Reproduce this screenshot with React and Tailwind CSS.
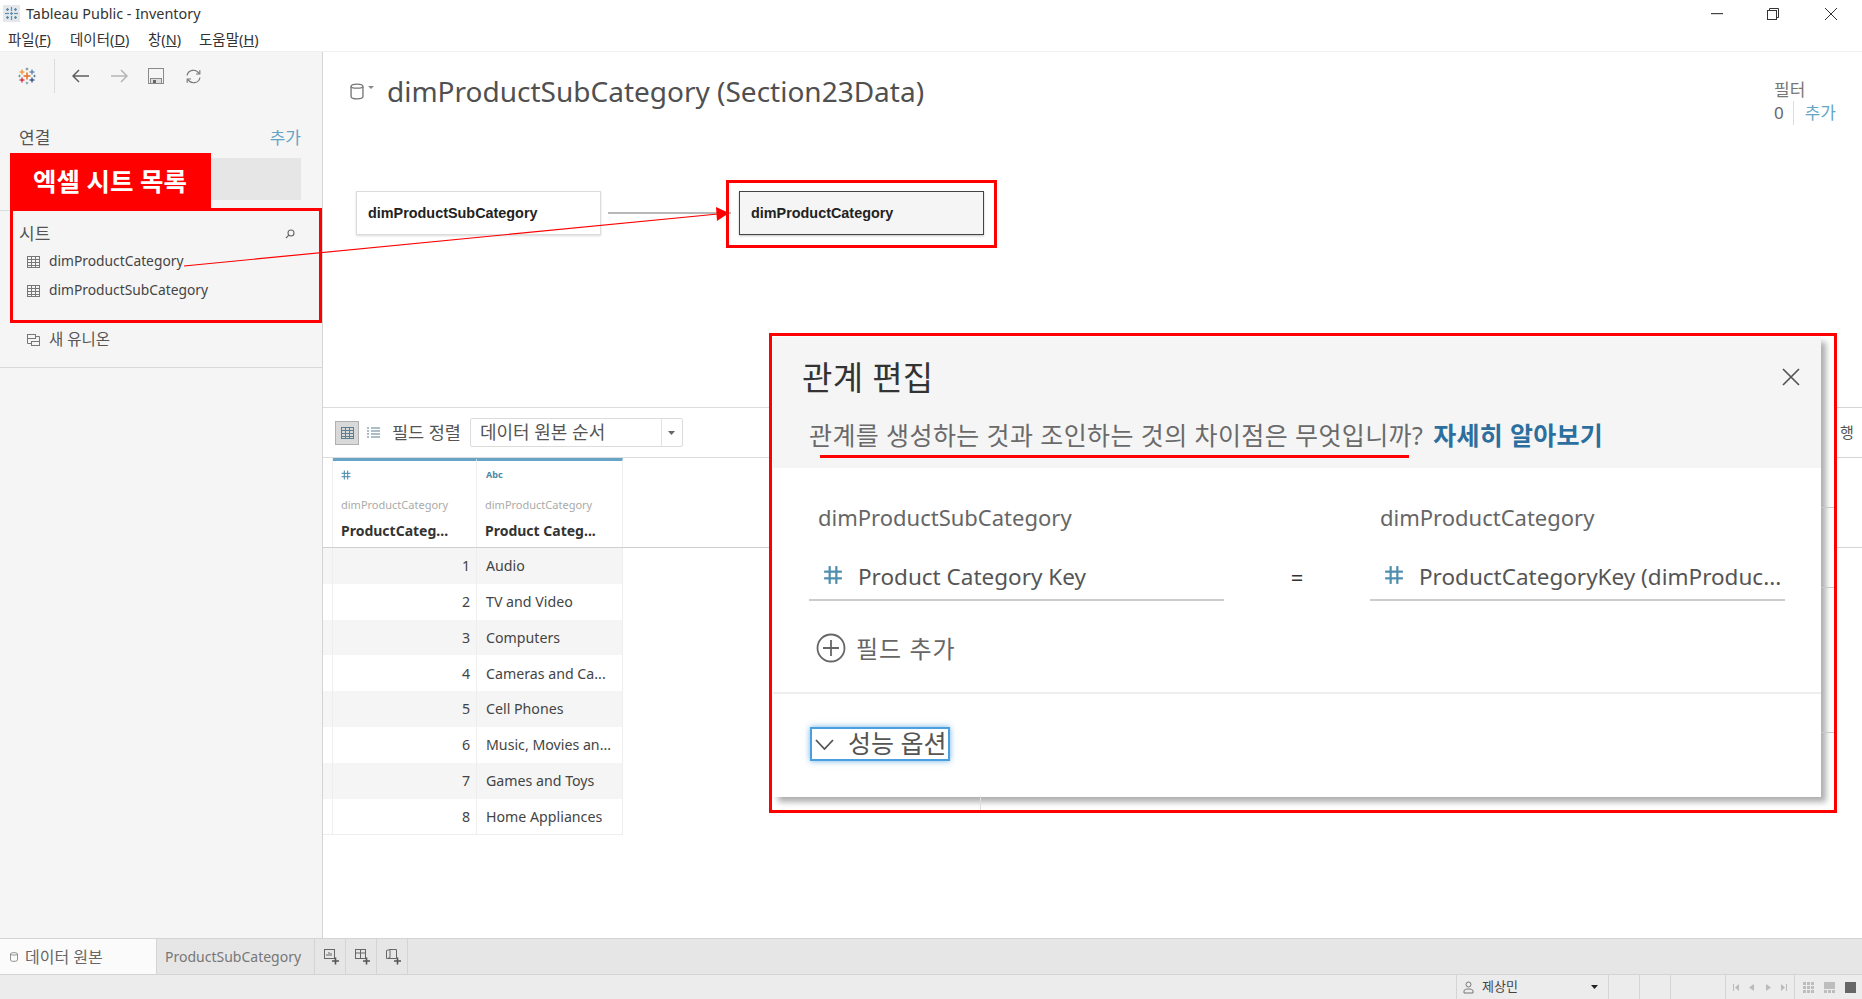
import React from "react";

const KR = '"Noto Sans","Noto Sans CJK KR",sans-serif';

function TableauLogo() {
  const P = ({ x, y, s, w, c }) => (
    <g stroke={c} strokeWidth={w}>
      <line x1={x - s} y1={y} x2={x + s} y2={y} />
      <line x1={x} y1={y - s} x2={x} y2={y + s} />
    </g>
  );
  return (
    <svg width="18" height="18" viewBox="0 0 18 18">
      <P x={9} y={9} s={3.5} w={1.6} c="#e8762b" />
      <P x={4} y={5} s={2.5} w={1.2} c="#f28e2b" />
      <P x={14} y={5} s={2.5} w={1.2} c="#4e79a7" />
      <P x={4} y={13} s={2.5} w={1.2} c="#c72035" />
      <P x={14} y={13} s={2.5} w={1.2} c="#1f447e" />
      <P x={9} y={2} s={1.3} w={1} c="#59879b" />
      <P x={9} y={16} s={1.3} w={1} c="#7099a6" />
      <P x={1.5} y={9} s={1.3} w={1} c="#7099a6" />
      <P x={16.5} y={9} s={1.3} w={1} c="#59879b" />
    </svg>
  );
}

function AppIcon() {
  return (
    <svg width="17" height="17" viewBox="0 0 17 17">
      <rect width="17" height="17" fill="#e4e8ec" />
      <g stroke="#5b8fb0" strokeWidth="1.2">
        <line x1="8.5" y1="2" x2="8.5" y2="6" />
        <line x1="8.5" y1="11" x2="8.5" y2="15" />
        <line x1="2" y1="8.5" x2="6" y2="8.5" />
        <line x1="11" y1="8.5" x2="15" y2="8.5" />
        <line x1="7" y1="8.5" x2="10" y2="8.5" />
        <line x1="8.5" y1="7" x2="8.5" y2="10" />
        <line x1="3" y1="4.5" x2="6" y2="4.5" />
        <line x1="4.5" y1="3" x2="4.5" y2="6" />
        <line x1="11" y1="4.5" x2="14" y2="4.5" />
        <line x1="12.5" y1="3" x2="12.5" y2="6" />
        <line x1="3" y1="12.5" x2="6" y2="12.5" />
        <line x1="4.5" y1="11" x2="4.5" y2="14" />
        <line x1="11" y1="12.5" x2="14" y2="12.5" />
        <line x1="12.5" y1="11" x2="12.5" y2="14" />
      </g>
    </svg>
  );
}

function GridIcon({ color = "#777" }) {
  return (
    <svg width="13" height="12" viewBox="0 0 13 12" fill="none" stroke={color} strokeWidth="1">
      <rect x="0.5" y="0.5" width="12" height="11" />
      <line x1="0.5" y1="3.5" x2="12.5" y2="3.5" />
      <line x1="0.5" y1="6.5" x2="12.5" y2="6.5" />
      <line x1="0.5" y1="9.5" x2="12.5" y2="9.5" />
      <line x1="4.5" y1="0.5" x2="4.5" y2="11.5" />
      <line x1="8.5" y1="0.5" x2="8.5" y2="11.5" />
    </svg>
  );
}

function DbIcon({ w = 8, h = 10 }) {
  return (
    <svg width={w} height={h} viewBox="0 0 8 10" fill="none" stroke="#777" strokeWidth="0.8">
      <path d="M0.5 2 C0.5 0.2 7.5 0.2 7.5 2 V8 C7.5 9.8 0.5 9.8 0.5 8 Z" />
      <path d="M0.5 2 C0.5 3.4 7.5 3.4 7.5 2" />
    </svg>
  );
}

function HashIcon({ size = 18, color = "#4f8fae" }) {
  return (
    <svg width={size} height={size} viewBox="0 0 18 18" stroke={color} strokeWidth="2" fill="none">
      <line x1="6" y1="1" x2="6" y2="17" />
      <line x1="12" y1="1" x2="12" y2="17" />
      <line x1="1" y1="6" x2="17" y2="6" />
      <line x1="1" y1="12" x2="17" y2="12" />
    </svg>
  );
}

function TabPlusIcon({ kind }) {
  return (
    <svg width="16" height="16" viewBox="0 0 16 16" fill="none" stroke="#666" strokeWidth="1">
      {kind === "sheet" && (
        <>
          <rect x="0.5" y="0.5" width="10" height="9" />
          <path d="M3 7V5M5 7V3M7 7V4" />
        </>
      )}
      {kind === "dash" && (
        <>
          <rect x="0.5" y="0.5" width="10" height="9" />
          <path d="M0.5 4H10.5M5.5 0.5V9.5" />
        </>
      )}
      {kind === "story" && <path d="M0.5 1.5 L4 0.5 V8.5 L1.5 9.5 H0.5Z M4 0.5 H10.5 V9.5 H1.5" />}
      <path d="M8 12H15M11.5 8.5V15.5" stroke="#555" strokeWidth="1.6" />
    </svg>
  );
}

const rows = [
  [1, "Audio"],
  [2, "TV and Video"],
  [3, "Computers"],
  [4, "Cameras and Ca..."],
  [5, "Cell Phones"],
  [6, "Music, Movies an..."],
  [7, "Games and Toys"],
  [8, "Home Appliances"],
];

function Sidebar() {
  return (
    <aside className="flex w-[323px] shrink-0 flex-col border-r border-[#d4d4d4] bg-[#f5f5f5]">
      <div className="flex h-[48px] items-center">
        <div className="ml-[18px] flex w-[18px] justify-center">
          <TableauLogo />
        </div>
        <div className="ml-[18px] h-[34px] w-px bg-[#dcdcdc]" />
        <svg className="ml-[17px]" width="18" height="14" viewBox="0 0 18 14" fill="none" stroke="#5f5f5f" strokeWidth="1.5">
          <path d="M17 7H1M7 1L1 7L7 13" />
        </svg>
        <svg className="ml-[20px]" width="18" height="14" viewBox="0 0 18 14" fill="none" stroke="#b5b5b5" strokeWidth="1.5">
          <path d="M1 7H17M11 1L17 7L11 13" />
        </svg>
        <svg className="ml-[20px]" width="16" height="16" viewBox="0 0 16 16" fill="none" stroke="#8a8a8a" strokeWidth="1">
          <rect x="0.5" y="0.5" width="15" height="15" />
          <rect x="2.5" y="10.5" width="11" height="5" fill="#ddd" />
          <rect x="5" y="12" width="3" height="3" fill="#666" stroke="none" />
        </svg>
        <svg className="ml-[21px]" width="17" height="17" viewBox="0 0 17 17" fill="none" stroke="#777" strokeWidth="1.2">
          <path d="M2 7.5A6.5 6.5 0 0 1 14 5.5" />
          <path d="M15 9.5A6.5 6.5 0 0 1 3 11.5" />
          <path d="M14.8 2.2V6H11" />
          <path d="M2.2 14.8V11H6" />
        </svg>
      </div>
      <div className="flex h-[52px] items-end justify-between pl-[19px] pr-[21px] text-[17px] leading-[28px]">
        <span className="text-[#555]">연결</span>
        <span className="text-[#64a5c6]">추가</span>
      </div>
      <div className="ml-[10px] mr-[21px] mt-[6px] h-[42px] bg-[#e6e6e6]" />
      <div className="mt-[10px] h-[1px] bg-[#dddddd]" />
      <div className="flex h-[36px] items-end justify-between pl-[19px] pr-[27px] text-[17px] leading-[26px] text-[#555]">
        <span>시트</span>
        <svg className="mb-[8px]" width="10" height="10" viewBox="0 0 10 10" fill="none" stroke="#666" strokeWidth="1.1">
          <circle cx="6" cy="4" r="3" />
          <path d="M3.8 6.2L1 9" />
        </svg>
      </div>
      {["dimProductCategory", "dimProductSubCategory"].map((t) => (
        <div key={t} className="flex h-[29px] items-center pl-[27px] text-[13.8px] text-[#444]">
          <GridIcon />
          <span className="ml-[9px]">{t}</span>
        </div>
      ))}
      <div className="mt-[20px] flex h-[29px] items-center pl-[27px] text-[15.5px] text-[#555]">
        <svg width="13" height="12" viewBox="0 0 13 12" fill="none" stroke="#777" strokeWidth="1">
          <rect x="0.5" y="0.5" width="8" height="4" />
          <rect x="4.5" y="7.5" width="8" height="4" />
          <path d="M8.5 2.5H12.5V7.5M4.5 9.5H0.5V4.5" />
        </svg>
        <span className="ml-[9px]">새 유니온</span>
      </div>
      <div className="mt-[13px] h-[1px] bg-[#d9d9d9]" />
    </aside>
  );
}

function Main() {
  return (
    <main className="flex min-w-0 flex-1 flex-col bg-white">
      <div className="relative h-[355px]">
        <div className="flex items-center pl-[27px] pt-[16px]">
          <DbIcon w={14} h={17} />
          <svg className="mb-[6px] ml-[4px]" width="6" height="4" viewBox="0 0 6 4" fill="#888">
            <path d="M0 0H6L3 3Z" />
          </svg>
          <h1 className="ml-[13px] text-[28px] font-normal leading-[46px] text-[#505050]">
            dimProductSubCategory (Section23Data)
          </h1>
        </div>
        <div className="absolute left-[1451px] top-[27px] text-[17px] text-[#777]">
          <div className="leading-[22px]">필터</div>
          <div className="flex items-center leading-[24px]">
            <span className="text-[#666]">0</span>
            <span className="ml-[9px] h-[24px] w-px bg-[#ddd]" />
            <span className="ml-[11px] text-[#64a5c6]">추가</span>
          </div>
        </div>
        <div className="absolute left-[33px] top-[139px] flex h-[44px] w-[245px] items-center border border-[#dcdcdc] bg-white pl-[11px] pt-[2px] text-[14.4px] font-bold text-[#222] shadow-[0_1px_2px_rgba(0,0,0,0.15)] [font-family:'Liberation_Sans',sans-serif]">
          dimProductSubCategory
        </div>
        <div className="absolute left-[285px] top-[160px] h-[2px] w-[123px] bg-[#b8b8b8]" />
        <div className="absolute left-[416px] top-[139px] flex h-[44px] w-[245px] items-center border border-[#444] bg-[#f5f5f5] pl-[11px] pt-[2px] text-[14.4px] font-bold text-[#222] shadow-[0_1px_2px_rgba(0,0,0,0.25)] [font-family:'Liberation_Sans',sans-serif]">
          dimProductCategory
        </div>
      </div>

      <div className="flex h-[51px] items-center border-y border-[#dcdcdc] pl-[12px]">
        <div className="flex h-[24px] w-[24px] items-center justify-center border border-[#b0b0b0] bg-[#d9d9d9]">
          <GridIcon color="#5d7f93" />
        </div>
        <svg className="ml-[8px]" width="13" height="11" viewBox="0 0 13 11" stroke="#5d7f93" strokeWidth="1.2">
          <path d="M0 1H2M4 1H13M0 4H2M4 4H13M0 7H2M4 7H13M0 10H2M4 10H13" />
        </svg>
        <span className="ml-[12px] text-[17.5px] text-[#555]">필드 정렬</span>
        <div className="ml-[9px] flex h-[29px] w-[213px] items-center rounded-[2px] border border-[#dcdcdc] bg-white text-[18px] text-[#555]">
          <span className="flex-1 pl-[9px]">데이터 원본 순서</span>
          <span className="flex h-full w-[21px] items-center justify-center border-l border-[#e2e2e2]">
            <svg width="7" height="4" viewBox="0 0 7 4" fill="#666">
              <path d="M0 0H7L3.5 4Z" />
            </svg>
          </span>
        </div>
      </div>

      <div className="flex h-[90px] border-b border-[#cfcfcf]">
        <div className="w-[10px] border-r border-[#eeeeee]" />
        {[
          ["#", "ProductCateg...", "w-[144px]"],
          ["Abc", "Product Categ...", "w-[146px]"],
        ].map(([type, name, w]) => (
          <div key={name} className={`${w} border-r border-t-[3px] border-r-[#eeeeee] border-t-[#67a5c8] pl-[8px]`}>
            <div className="flex h-[27px] items-center">
              {type === "#" ? (
                <HashIcon size={10} color="#4f8fae" />
              ) : (
                <span className="pl-[1px] text-[9px] font-bold text-[#4c87a5]">Abc</span>
              )}
            </div>
            <div className="mt-[4px] text-[11px] leading-[26px] text-[#aaaaaa]">dimProductCategory</div>
            <div className="text-[14px] font-bold leading-[26px] text-[#333]">{name}</div>
          </div>
        ))}
      </div>

      <div className="w-[300px]">
        {rows.map(([n, t], i) => (
          <div
            key={n}
            className={`flex h-[35.8px] items-center text-[14.2px] text-[#444] ${i % 2 === 0 ? "bg-[#f5f5f5]" : "bg-white"}`}
          >
            <div className="h-full w-[10px] border-r border-[#eeeeee]" />
            <div className="flex h-full w-[144px] items-center justify-end border-r border-[#eeeeee] pr-[6px]">{n}</div>
            <div className="flex h-full w-[146px] items-center border-r border-[#eeeeee] pl-[9px]">{t}</div>
          </div>
        ))}
        <div className="h-px bg-[#eeeeee]" />
      </div>
    </main>
  );
}

function Tabs() {
  return (
    <>
      <div className="flex h-[37px] border-y border-[#d4d4d4] bg-[#e6e6e6] text-[14px] text-[#666]">
        <div className="flex w-[157px] items-center border-r border-[#d4d4d4] bg-[#fbfbfb] pl-[10px]">
          <DbIcon />
          <span className="ml-[7px] text-[16px]">데이터 원본</span>
        </div>
        <div className="flex w-[158px] items-center border-r border-[#d4d4d4] pl-[8px] text-[#777]">ProductSubCategory</div>
        {["sheet", "dash", "story"].map((k) => (
          <div key={k} className="flex w-[31px] items-center justify-center border-r border-[#d4d4d4] pl-[3px]">
            <TabPlusIcon kind={k} />
          </div>
        ))}
      </div>
      <div className="flex h-[24px] justify-end bg-[#ececec]">
        <div className="flex w-[152px] items-center border-l border-[#d4d4d4] pl-[6px] text-[13px] text-[#444]">
          <svg width="11" height="13" viewBox="0 0 11 13" fill="none" stroke="#777" strokeWidth="1">
            <circle cx="5.5" cy="3.5" r="2.5" />
            <path d="M1 12V10C1 8.5 3 8 5.5 8S10 8.5 10 10V12Z" />
          </svg>
          <span className="ml-[8px] flex-1">제상민</span>
          <svg className="mr-[10px]" width="7" height="4" viewBox="0 0 7 4" fill="#222">
            <path d="M0 0H7L3.5 4Z" />
          </svg>
        </div>
        <div className="w-[31px] border-l border-[#d4d4d4]" />
        <div className="w-[31px] border-l border-[#d4d4d4]" />
        <div className="w-[55px] border-l border-[#d4d4d4]" />
        <div className="flex w-[69px] items-center justify-center gap-[8px] border-l border-[#d4d4d4]">
          <svg width="6" height="7" viewBox="0 0 6 7" fill="#bbb"><path d="M0 0H1V7H0ZM6 0V7L2 3.5Z" /></svg>
          <svg className="ml-[2px]" width="5" height="7" viewBox="0 0 5 7" fill="#bbb"><path d="M5 0V7L0 3.5Z" /></svg>
          <svg className="ml-[4px]" width="5" height="7" viewBox="0 0 5 7" fill="#bbb"><path d="M0 0V7L5 3.5Z" /></svg>
          <svg className="ml-[2px]" width="6" height="7" viewBox="0 0 6 7" fill="#bbb"><path d="M5 0H6V7H5ZM0 0V7L4 3.5Z" /></svg>
        </div>
        <div className="flex w-[68px] items-center gap-[10px] border-l border-[#d4d4d4] pl-[8px]">
          <svg width="11" height="11" viewBox="0 0 11 11" fill="#bdbdbd">
            <path d="M0 0h3v3H0zM4 0h3v3H4zM8 0h3v3H8zM0 4h3v3H0zM4 4h3v3H4zM8 4h3v3H8zM0 8h3v3H0zM4 8h3v3H4zM8 8h3v3H8z" />
          </svg>
          <svg width="11" height="11" viewBox="0 0 11 11" fill="#bdbdbd">
            <path d="M0 0h11v7H0zM0 8h3v3H0zM4 8h3v3H4zM8 8h3v3H8z" />
          </svg>
          <svg width="11" height="11" viewBox="0 0 11 11" fill="#666">
            <path d="M0 0h11v11H0z" />
          </svg>
        </div>
      </div>
    </>
  );
}

function Modal() {
  return (
    <div className="absolute left-[769px] top-[333px] h-[480px] w-[1068px] overflow-hidden border-[3px] border-[#ff0000] bg-white">
      <div className="absolute left-[1049px] top-[171px] h-px w-[16px] bg-[#c8c8c8]" />
      <div className="absolute left-[1049px] top-[251px] h-px w-[16px] bg-[#c8c8c8]" />
      <div className="absolute left-[1049px] top-[396px] h-px w-[16px] bg-[#c8c8c8]" />
      <div className="absolute left-[208px] top-[460px] h-[20px] w-px bg-[#dddddd]" />
      <div className="ml-px mt-px flex h-[460px] w-[1048px] flex-col bg-white shadow-[5px_5px_6px_rgba(0,0,0,0.32)]">
        <div className="relative h-[131px] bg-[#f5f5f5]">
          <div className="pl-[29px] pt-[16px] text-[33px] leading-[50px] tracking-[0.3px] text-[#333]">관계 편집</div>
          <div className="mt-[16px] flex items-baseline whitespace-nowrap pl-[36px] text-[25px] leading-[32px] text-[#6a6a6a]">
            <span className="tracking-[0.4px]">관계를 생성하는 것과 조인하는 것의 차이점은 무엇입니까?</span>
            <span className="ml-[10px] font-bold tracking-[0.3px] text-[#2c6f9f]">자세히 알아보기</span>
          </div>
          <svg className="absolute right-[21px] top-[31px]" width="18" height="18" viewBox="0 0 18 18" stroke="#555" strokeWidth="1.7">
            <path d="M1 1L17 17M17 1L1 17" />
          </svg>
        </div>
        <div className="grid grid-cols-[415px_1fr_415px] pl-[36px] pr-[36px]">
          <div className="col-start-1 pl-[9px] pt-[31px] text-[22px] leading-[37px] text-[#666]">dimProductSubCategory</div>
          <div />
          <div className="col-start-3 pl-[10px] pt-[31px] text-[22px] leading-[37px] text-[#666]">dimProductCategory</div>
          <div className="col-start-1 mt-[23px] flex h-[42px] items-start border-b-2 border-[#cccccc] pl-[14px] text-[22.5px] leading-[36px] text-[#555]">
            <span className="mt-[6px]"><HashIcon size={20} /></span>
            <span className="ml-[15px]">Product Category Key</span>
          </div>
          <div className="mt-[23px] text-center text-[22px] leading-[36px] text-[#333]">=</div>
          <div className="col-start-3 mt-[23px] flex h-[42px] items-start border-b-2 border-[#cccccc] pl-[14px] text-[22.5px] leading-[36px] text-[#555]">
            <span className="mt-[6px]"><HashIcon size={20} /></span>
            <span className="ml-[15px] whitespace-nowrap">ProductCategoryKey (dimProduc...</span>
          </div>
        </div>
        <div className="ml-[43px] mt-[32px] flex h-[30px] items-center text-[24px] text-[#666]">
          <svg width="30" height="30" viewBox="0 0 30 30" fill="none" stroke="#666" strokeWidth="1.8">
            <circle cx="15" cy="15" r="13.5" />
            <path d="M15 7V23M7 15H23" />
          </svg>
          <span className="ml-[10px] mt-[2px] tracking-[1px]">필드 추가</span>
        </div>
        <div className="mt-[29px] h-[2px] bg-[#eeeeee]" />
        <div className="ml-[37px] mt-[33px] flex h-[34px] w-[140px] items-center border-2 border-[#4a9fe0] pl-[3px] text-[25px] text-[#555] shadow-[0_0_6px_rgba(74,159,224,0.8)]">
          <svg className="shrink-0" width="19" height="11" viewBox="0 0 19 11" fill="none" stroke="#555" strokeWidth="1.8">
            <path d="M1 1L9.5 10L18 1" />
          </svg>
          <span className="ml-[14px] whitespace-nowrap">성능 옵션</span>
        </div>
      </div>
    </div>
  );
}

export default function App() {
  return (
    <div className="relative flex h-[999px] w-[1862px] flex-col overflow-hidden bg-white" style={{ fontFamily: KR }}>
      <header className="flex h-[27px] items-center pl-[3px] text-[14.4px] text-[#333]">
        <AppIcon />
        <span className="ml-[6px]">Tableau Public - Inventory</span>
        <div className="ml-auto flex items-center">
          <svg width="12" height="2" viewBox="0 0 12 2" fill="#444"><rect width="12" height="1.2" /></svg>
          <svg className="ml-[44px]" width="12" height="12" viewBox="0 0 12 12" fill="none" stroke="#333" strokeWidth="1">
            <rect x="0.5" y="2.5" width="9" height="9" />
            <path d="M2.5 2.5V0.5H11.5V9.5H9.5" />
          </svg>
          <svg className="ml-[46px] mr-[25px]" width="12" height="12" viewBox="0 0 12 12" fill="none" stroke="#333" strokeWidth="1">
            <path d="M0 0L12 12M12 0L0 12" />
          </svg>
        </div>
      </header>
      <nav className="flex h-[25px] items-center border-b border-[#f0f0f0] pl-[8px] pt-[2px] text-[14.5px] text-[#333]">
        <span className="w-[62px]">파일(<u>F</u>)</span>
        <span className="w-[78px]">데이터(<u>D</u>)</span>
        <span className="w-[51px]">창(<u>N</u>)</span>
        <span>도움말(<u>H</u>)</span>
      </nav>
      <div className="flex min-h-0 flex-1">
        <Sidebar />
        <Main />
      </div>
      <Tabs />

      <div className="absolute left-[1837px] top-[407px] h-[141px] w-[25px] border-y border-[#d4d4d4] bg-white">
        <div className="pl-[3px] pt-[14px] text-[15px] leading-[20px] text-[#555]">행</div>
      </div>
      <div className="absolute left-[1837px] top-[457px] h-px w-[25px] bg-[#d4d4d4]" />

      <Modal />

      <div className="absolute left-[10px] top-[153px] flex h-[55px] w-[201px] items-center bg-[#ff0000] pl-[23px] pt-[2px] text-[25.5px] font-bold text-white">
        엑셀 시트 목록
      </div>
      <div className="absolute left-[10px] top-[208px] h-[115px] w-[312px] border-[3px] border-[#ff0000]" />
      <div className="absolute left-[726px] top-[180px] h-[68px] w-[271px] border-[3px] border-[#ff0000]" />
      <div className="absolute left-[820px] top-[455px] h-[3px] w-[589px] bg-[#ff0000]" />
      <svg className="pointer-events-none absolute left-0 top-0" width="1862" height="999">
        <line x1="184" y1="266" x2="718" y2="214" stroke="#ff0000" strokeWidth="1.2" />
        <polygon points="729,213 716,207 717,221" fill="#ff0000" />
      </svg>
    </div>
  );
}
